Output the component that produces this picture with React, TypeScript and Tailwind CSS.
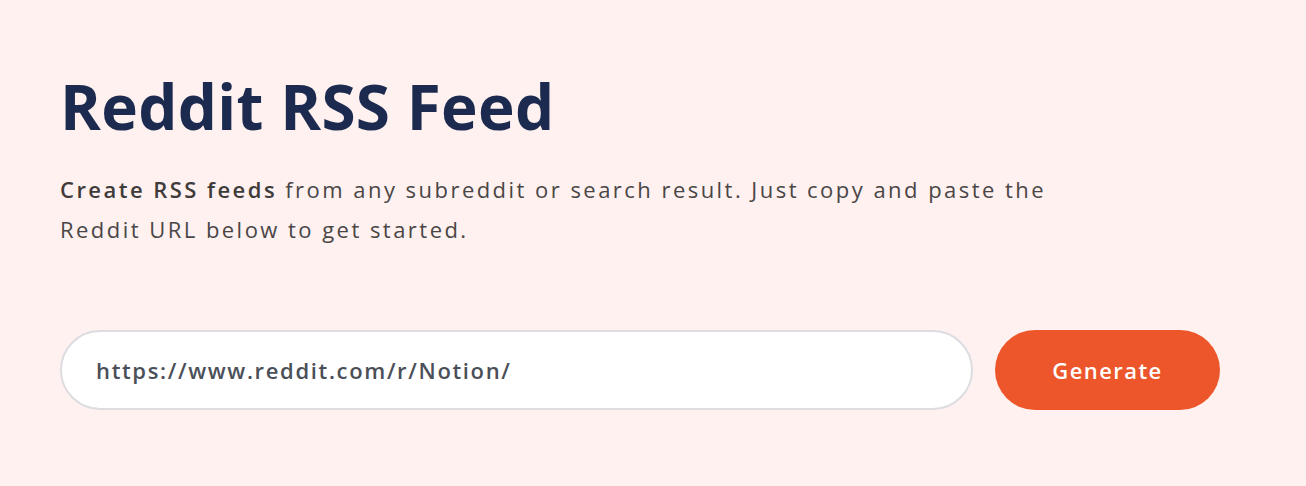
import React from 'react';

const App: React.FC = () => (
  <div
    className="min-h-[486px] w-full bg-[#fef1ef] px-[60px] pt-[68px]"
    style={{ fontFamily: '"Open Sans", "Noto Sans", sans-serif' }}
  >
    <h1 className="text-[62px] font-bold leading-[76px] text-[#1b2a4e] tracking-[0.005em]">
      Reddit RSS Feed
    </h1>
    <p className="mt-[25px] max-w-[1000px] text-[22px] leading-[40px] tracking-[0.112em] text-[#4a4646]">
      <span className="font-semibold text-[#3f3b3b]">Create RSS feeds</span> from any subreddit or
      search result. Just copy and paste the Reddit URL below to get started.
    </p>
    <div className="mt-[81px] flex items-center gap-[22px]">
      <div className="flex h-[80px] w-[913px] items-center rounded-full border-2 border-[#dcdce1] bg-white px-[34px]">
        <span className="text-[22px] font-semibold tracking-[0.075em] text-[#4b4f58]">
          https://www.reddit.com/r/Notion/
        </span>
      </div>
      <button
        type="button"
        className="h-[80px] w-[225px] rounded-full bg-[#ec562a] text-[22px] font-semibold tracking-[0.065em] text-white"
      >
        Generate
      </button>
    </div>
  </div>
);

export default App;
